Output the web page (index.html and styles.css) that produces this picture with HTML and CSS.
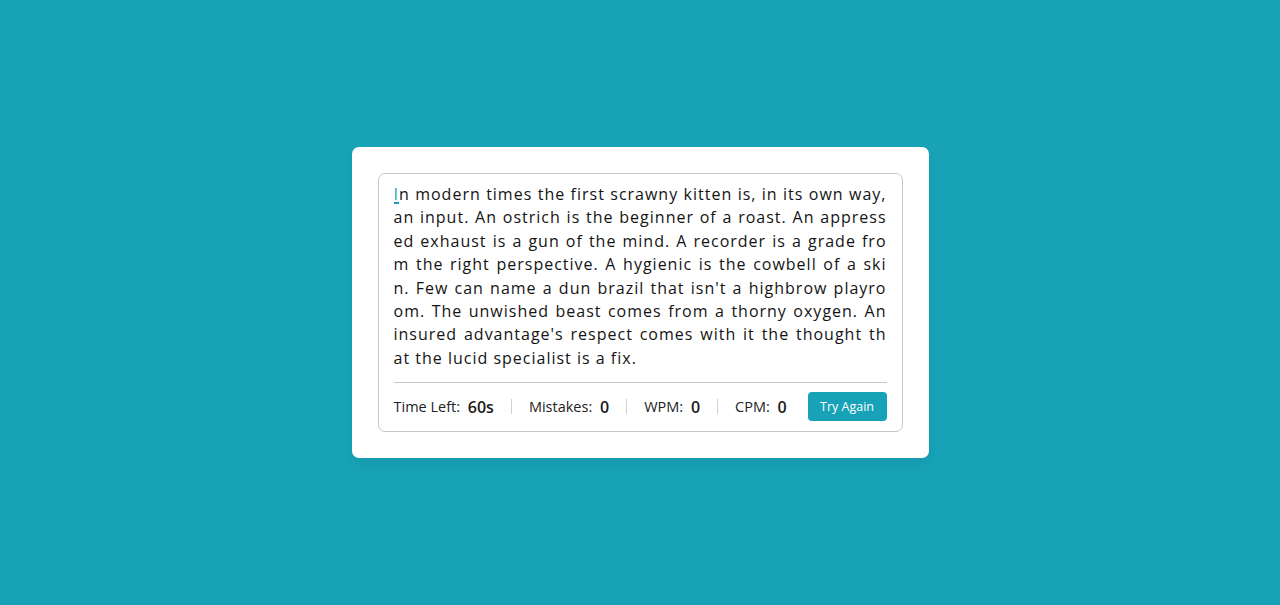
FILE: index.html
```html
<!DOCTYPE html>
<html lang="en">
<head>
<meta charset="utf-8">
<title>Typing Speed Test</title>
<link rel="stylesheet" href="styles.css">
</head>
<body>
<div class="wrapper">
  <div class="content-box">
    <p class="typing-text">
      <span class="line"><span class="active">I</span>n modern times the first scrawny kitten is, in its own way,</span>
      <span class="line">an input. An ostrich is the beginner of a roast. An appress</span>
      <span class="line">ed exhaust is a gun of the mind. A recorder is a grade fro</span>
      <span class="line">m the right perspective. A hygienic is the cowbell of a ski</span>
      <span class="line">n. Few can name a dun brazil that isn't a highbrow playro</span>
      <span class="line">om. The unwished beast comes from a thorny oxygen. An</span>
      <span class="line">insured advantage's respect comes with it the thought th</span>
      <span class="line last">at the lucid specialist is a fix.</span>
    </p>
    <div class="content">
      <ul class="result-details">
        <li>Time Left: <span class="value">60s</span></li>
        <li>Mistakes: <span class="value">0</span></li>
        <li>WPM: <span class="value">0</span></li>
        <li>CPM: <span class="value">0</span></li>
      </ul>
      <button class="try-btn">Try Again</button>
    </div>
  </div>
</div>
</body>
</html>
```

FILE: styles.css
```css
* {
  margin: 0;
  padding: 0;
  box-sizing: border-box;
}

body {
  min-height: 100vh;
  display: flex;
  align-items: center;
  justify-content: center;
  background: #17a2b8;
  font-family: "Open Sans", "Noto Sans", sans-serif;
}

.wrapper {
  width: 577px;
  padding: 26px;
  background: #fff;
  border-radius: 7px;
  box-shadow: 0 8px 12px rgba(0, 0, 0, 0.05);
}

.content-box {
  padding: 9px 15px 0;
  border: 1px solid #c8c8c8;
  border-radius: 7px;
}

.typing-text {
  font-size: 16px;
  line-height: 23.4px;
  letter-spacing: 1px;
  color: #141414;
}

.line {
  display: block;
  text-align: justify;
  text-align-last: justify;
  white-space: nowrap;
}

.line.last {
  text-align-last: left;
}

.active {
  position: relative;
  color: #17a2b8;
}

.active::before {
  content: "";
  position: absolute;
  left: 0;
  right: 0;
  bottom: 1px;
  height: 1.5px;
  background: #17a2b8;
}

.content {
  margin-top: 12px;
  padding: 9px 0 10px;
  border-top: 1px solid #c8c8c8;
  display: flex;
  align-items: center;
  justify-content: space-between;
}

.result-details {
  display: flex;
  list-style: none;
  align-items: center;
}

.result-details li {
  display: flex;
  align-items: center;
  height: 15px;
  padding: 0 17px;
  border-left: 1px solid #d0d0d0;
  font-size: 14.5px;
  color: #222;
  white-space: pre;
}

.result-details li:first-child {
  padding-left: 0;
  border-left: none;
}

.value {
  margin-left: 4px;
  font-size: 16px;
  font-weight: 600;
  color: #1a1a1a;
}

.try-btn {
  width: 79px;
  height: 29px;
  border: none;
  border-radius: 4px;
  background: #17a2b8;
  color: #fff;
  font-family: inherit;
  font-size: 12.5px;
  font-weight: 500;
}
```
